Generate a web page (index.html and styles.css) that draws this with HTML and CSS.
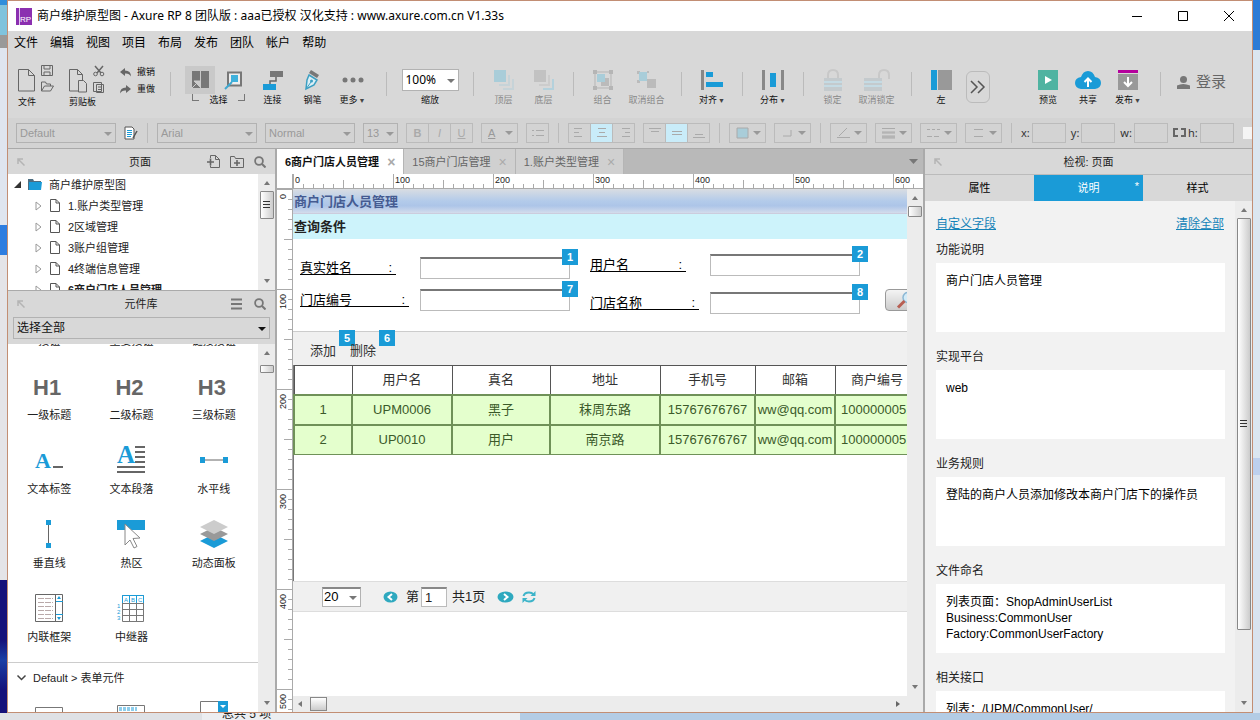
FILE: index.html
```html
<!DOCTYPE html>
<html lang="zh-CN">
<head>
<meta charset="utf-8">
<title>商户维护原型图 - Axure RP 8</title>
<link rel="stylesheet" href="styles.css">
</head>
<body>
<svg class="defs" aria-hidden="true">
  <symbol id="page" viewBox="0 0 10 13"><path d="M.5.5h5.500l3.500 3.500v8.500h-9zM6 .5V4h3.500" fill="#fff" stroke="#555"/></symbol>
  <symbol id="twig" viewBox="0 0 7 10"><path d="M1 1l5 4-5 4z" fill="none" stroke="#999"/></symbol>
  <symbol id="up" viewBox="0 0 6 4"><path d="M0 4l3-4 3 4z" fill="#777"/></symbol>
  <symbol id="down" viewBox="0 0 6 4"><path d="M0 0l3 4 3-4z" fill="#777"/></symbol>
  <symbol id="pin" viewBox="0 0 8 8"><path d="M7.500 7.500L1.500 1.500M1 6V1h5" fill="none" stroke="#b4b4b4" stroke-width="1.500"/></symbol>
  <symbol id="find" viewBox="0 0 12 12"><circle cx="5" cy="5" r="3.900" fill="none" stroke="#777" stroke-width="1.800"/><path d="M8 8l3.500 3.500" stroke="#777" stroke-width="2"/></symbol>
</svg>
<div class="desktop">
  <div class="edge-left"></div>
  <main class="window">
    <header class="titlebar">
      <svg class="logo" width="16" height="17" viewBox="0 0 16 17"><path fill="#8b2fb0" d="M0 0h16v17H0z"/><path stroke="#e3c6ee" d="M3.500 0v17"/><text x="4" y="14" font-size="8" fill="#fff" font-family="Liberation Sans">RP</text></svg>
      <h1>商户维护原型图 - Axure RP 8 团队版 : aaa已授权 汉化支持 : www.axure.com.cn V1.33s</h1>
      <button class="winbtn" aria-label="最小化"><svg width="11" height="11"><path d="M0 5.500h10" stroke="#000"/></svg></button>
      <button class="winbtn" aria-label="最大化"><svg width="11" height="11"><path d="M.5.5h9v9h-9z" fill="none" stroke="#000"/></svg></button>
      <button class="winbtn" aria-label="关闭"><svg width="11" height="11"><path d="M0 0l10 10M10 0L0 10" stroke="#000"/></svg></button>
    </header>
    <nav class="menu"><button>文件</button><button>编辑</button><button>视图</button><button>项目</button><button>布局</button><button>发布</button><button>团队</button><button>帐户</button><button>帮助</button></nav>

    <div class="toolbar">
      <div class="group file">
        <div class="cluster"><div class="icons">
          <svg width="37" height="28" fill="none" stroke="#666"><path d="M.5 3.500h10l6 6v15.500h-16zM10.500 3.500v6h6M23.500-.500h11v10h-11zM26 0v3h6V0M26 9V6h6v3M23.500 25v-9h4l1 2h4v2M23.500 25l3-5h9l-3 5z"/></svg></div><span>文件</span></div>
        <div class="cluster"><div class="icons">
          <svg width="37" height="28" fill="none" stroke="#666"><path d="M9 25H.5V3.500h8l5 5V14M8.500 3.500v5h5M9.500 14.500h5l3 3V26h-8zM24.500 16.500h8v9h-8zM27.500 18.500h7v8h-7zM29 21h4M29 23.500h4"/><path d="M26 0l6 7M34 0l-6 7" stroke-width="1.500"/><circle cx="26.500" cy="8" r="1.800"/><circle cx="33" cy="8" r="1.800"/></svg></div><span>剪贴板</span></div>
        <div class="history">
          <button><svg width="12" height="9"><path d="M0 4l5-4v2.500q6 0 6 6Q9 5 5 5.500V8z" fill="#666"/></svg>撤销</button>
          <button><svg width="12" height="9"><path d="M11 4L6 0v2.500q-6 0-6 6Q2 5 6 5.500V8z" fill="#666"/></svg>重做</button>
        </div>
      </div>
      <i class="sep"></i>
      <div class="group pick">
        <div class="select-tool">
          <div class="icons"><button class="on" aria-label="相交选中"><svg width="18" height="20"><path d="M1 1h8v17H1zM10 1h8v17h-8z" fill="#777"/><path d="M0 19l6-6M3 11h6v6z" stroke="#ccc" fill="#ccc"/></svg></button>
          <button aria-label="包含选中"><svg width="18" height="20"><path d="M3 2.500h13v13H3z" fill="#eee" stroke="#777" stroke-width="2"/><path d="M6 5h7v7H6z" fill="#3fb1dc"/><path d="M0 19l7-7" stroke="#3fa8d0" stroke-width="2"/></svg></button></div>
          <span class="bracket"><i></i>选择<i></i></span>
        </div>
        <button class="tool"><svg width="20" height="20"><path d="M7 1h13v6H7z" fill="#777"/><path d="M13 7v4H7v4" fill="none" stroke="#666" stroke-width="1.500"/><path d="M0 14h13v6H0z" fill="#1a9bd7"/></svg>连接</button>
        <button class="tool"><svg width="16" height="20"><path d="M6 0l8 5-2 3-8-5z" fill="#777"/><path d="M4 5l8 5-3 5-8 4 1-9z" fill="#dceff6" stroke="#3c9fc2" stroke-width="1.500"/><path d="M1 19l5-7" stroke="#3c9fc2"/><circle cx="6.500" cy="11" r="1.500" fill="#3c9fc2"/></svg>钢笔</button>
        <button class="tool"><svg width="22" height="6"><circle cx="3" cy="3" r="2.500" fill="#777"/><circle cx="11" cy="3" r="2.500" fill="#777"/><circle cx="19" cy="3" r="2.500" fill="#777"/></svg><span>更多<b>▼</b></span></button>
      </div>
      <i class="sep"></i>
      <div class="group zoom"><label class="tool"><span class="combo white"><select><option>100%</option></select></span>缩放</label></div>
      <i class="sep"></i>
      <div class="group order">
        <button class="tool off"><svg width="20" height="20"><path d="M0 0h12v12H0z" fill="#a9cdd9"/><path d="M14 5h2v11H5v-2h9zM18 9h2v11H9v-2h9z" fill="#c6d3d8"/></svg>顶层</button>
        <button class="tool off"><svg width="20" height="20"><path d="M0 0h12v12H0z" fill="#c2c2c2"/><path d="M14 5h2v11H5v-2h9z" fill="#ccc"/><path d="M18 9h2v11H9v-2h9z" fill="#b4d1dc"/></svg>底层</button>
      </div>
      <i class="sep"></i>
      <div class="group pair">
        <button class="tool off"><svg width="20" height="20"><path d="M2 2h16v16H2z" fill="none" stroke="#b5b5b5"/><path d="M0 0h4v4H0zM16 0h4v4h-4zM0 16h4v4H0zM16 16h4v4h-4z" fill="#b5b5b5"/><path d="M8 8h8v8H8z" fill="#bbb"/><path d="M4 4h8v8H4z" fill="#a9cdd9"/></svg>组合</button>
        <button class="tool off"><svg width="20" height="20"><path d="M0 1h3v3H0zM10 1h2v2h-2zM0 10h3v3H0z" fill="#bbb"/><path d="M2 2h8v9H2z" fill="#a9cdd9"/><path d="M10 9h9v9h-9z" fill="#bbb"/></svg>取消组合</button>
      </div>
      <i class="sep"></i>
      <div class="group align"><button class="tool"><svg width="22" height="20"><path d="M0 0h3v20H0z" fill="#888"/><path d="M5 2h7v5H5zM5 12h17v5H5z" fill="#1a9bd7"/></svg><span>对齐<b>▼</b></span></button></div>
      <i class="sep"></i>
      <div class="group align"><button class="tool"><svg width="22" height="20"><path d="M0 0h3v20H0zM19 0h3v20h-3z" fill="#888"/><path d="M8 3h6v14H8z" fill="#1a9bd7"/></svg><span>分布<b>▼</b></span></button></div>
      <i class="sep"></i>
      <div class="group pair">
        <button class="tool off"><svg width="18" height="22"><path d="M4 9V6q0-5 5-5t5 5v3" fill="none" stroke="#c8c8c8" stroke-width="2"/><path d="M0 9h18v13H0z" fill="#c4cacd"/><path d="M0 13h18M0 17h18" stroke="#c5dbe4" stroke-width="2"/></svg>锁定</button>
        <button class="tool off"><svg width="26" height="22"><path d="M15 9V6q0-5 5-5t5 5v4" fill="none" stroke="#c8c8c8" stroke-width="2"/><path d="M0 9h18v13H0z" fill="#c4cacd"/><path d="M0 13h18M0 17h18" stroke="#c5dbe4" stroke-width="2"/></svg>取消锁定</button>
      </div>
      <i class="sep"></i>
      <div class="group dock"><button class="tool"><svg width="21" height="20"><path d="M0 0h6v20H0z" fill="#1a9bd7"/><path d="M7 0h14v20H7z" fill="#999"/></svg>左</button></div>
      <button class="overflow" aria-label="更多工具"><svg width="16" height="14"><path d="M1 1l6 6-6 6M8 1l6 6-6 6" fill="none" stroke="#555" stroke-width="1.500"/></svg></button>
      <div class="group share">
        <button class="tool"><svg width="20" height="20"><path d="M0 0h20v20H0z" fill="#4fb3a1"/><path d="M7 6l7 4-7 4z" fill="#fff"/></svg>预览</button>
        <button class="tool"><svg width="26" height="20"><path d="M6 19q-6-1-6-6t6-6q2-6 7-6t7 6q6 1 6 6t-6 6z" fill="#1a9bd7"/><path d="M13 17V9M9.500 12l3.500-3.500 3.500 3.500" fill="none" stroke="#fff" stroke-width="2"/></svg>共享</button>
        <button class="tool"><svg width="20" height="20"><path d="M0 0h20v3H0z" fill="#b5009c"/><path d="M0 4h20v16H0z" fill="#999"/><path d="M10 7v9M6 12l4 4 4-4" fill="none" stroke="#fff" stroke-width="2"/></svg><span>发布<b>▼</b></span></button>
      </div>
      <i class="sep"></i>
      <button class="login"><svg width="13" height="13"><circle cx="6.500" cy="3.500" r="3.500" fill="#777"/><path d="M0 13V9.500q6-3 13 0V13z" fill="#777"/></svg>登录</button>
    </div>

    <div class="format">
      <span class="combo w100"><select disabled aria-label="样式"><option>Default</option></select></span>
      <button class="plain" aria-label="管理样式"><svg width="14" height="14"><path d="M1 1h7l2 2v10H1z" fill="#fff" stroke="#555"/><path d="M3 4.500h5M3 6.500h5M3 8.500h5M3 10.500h4" stroke="#1a9bd7"/><path d="M13 5l-4 7" stroke="#555" stroke-width="1.500"/></svg></button>
      <i class="bar"></i>
      <span class="combo w100"><select disabled aria-label="字体"><option>Arial</option></select></span>
      <span class="combo w90"><select disabled aria-label="字重"><option>Normal</option></select></span>
      <span class="combo w35"><select disabled aria-label="字号"><option>13</option></select></span>
      <span class="seg"><button><b>B</b></button><button><i>I</i></button><button><u>U</u></button></span>
      <button class="drop"><u>A</u></button>
      <span class="seg"><button aria-label="项目符号"><svg width="12" height="10"><path d="M0 2.500h2M4 2.500h8M0 7.500h2M4 7.500h8"/></svg></button></span>
      <i class="bar"></i>
      <span class="seg"><button aria-label="左对齐"><svg width="12" height="10"><path d="M0 .5h8M0 4.500h5M0 8.500h8"/></svg></button><button class="on" aria-label="居中"><svg width="12" height="10"><path d="M2 .5h8M3 4.500h6M1 8.500h10"/></svg></button><button aria-label="右对齐"><svg width="12" height="10"><path d="M4 .5h8M7 4.500h5M4 8.500h8"/></svg></button></span>
      <span class="seg"><button aria-label="顶端"><svg width="12" height="10"><path d="M0 .5h12M2 3.500h8"/></svg></button><button class="on" aria-label="中部"><svg width="12" height="10"><path d="M1 3.500h10M1 6.500h10"/></svg></button><button aria-label="底部"><svg width="12" height="10"><path d="M2 6.500h8M0 9.500h12"/></svg></button></span>
      <i class="bar"></i>
      <button class="drop" aria-label="填充"><svg width="13" height="12"><path d="M1 1h11v10H1z" fill="#a9cdd9"/></svg></button>
      <button class="drop" aria-label="阴影"><svg width="13" height="10"><path d="M2 8h8V2"/></svg></button>
      <i class="bar"></i>
      <button class="drop" aria-label="线色"><svg width="13" height="12"><path d="M2 9l8-8M0 10.500h13"/></svg></button>
      <button class="drop" aria-label="线宽"><svg width="13" height="12"><path d="M0 1.500h13M0 5h13M0 6h13M0 9h13M0 10h13M0 11h13"/></svg></button>
      <button class="drop" aria-label="线型"><svg width="13" height="10"><path d="M0 1.500h3M5 1.500h3M10 1.500h3M0 8.500h5M7 8.500h5"/></svg></button>
      <button class="drop" aria-label="箭头"><svg width="13" height="10"><path d="M2 1.500h9M2 8.500h9"/></svg></button>
      <i class="bar"></i>
      <label>x:<input></label><label>y:<input></label><label>w:<input></label>
      <label><svg width="13" height="10"><path class="link" d="M5 1H1v7h4M8 1h4v7H8"/></svg>h:<input></label>
      <input type="checkbox" class="hide" aria-label="隐藏">
    </div>

    <div class="work">
      <aside class="left">
        <div class="panel-head"><svg width="8" height="8"><use href="#pin"/></svg><h2>页面</h2>
          <button aria-label="添加页面"><svg width="13" height="13" fill="none" stroke="#666"><path d="M3.500 3V.5h5l4 4v8h-9v-2M8.500.5v4h4"/><path d="M0 7h7M3.500 3.500v7" stroke-width="1.600"/></svg></button>
          <button aria-label="添加文件夹"><svg width="14" height="12" fill="none" stroke="#666"><path d="M.5 11.500V.5h4l1 2h8v9z"/><path d="M4 7h6M7 4v6" stroke-width="1.600"/></svg></button>
          <button aria-label="搜索页面"><svg width="12" height="12"><use href="#find"/></svg></button></div>
        <div class="scroller tree-pane">
          <ul class="tree">
            <li class="root"><svg width="7" height="7"><path d="M7 0v7H0z" fill="#333"/></svg><svg width="14" height="11"><path d="M0 0h5l1 2h7v9H0z" fill="#4d6d80"/><path d="M1 3h13l-1 8H1z" fill="#1a9bd7"/></svg>商户维护原型图</li>
            <li><svg width="7" height="10"><use href="#twig"/></svg><svg width="10" height="13"><use href="#page"/></svg>1.账户类型管理</li>
            <li><svg width="7" height="10"><use href="#twig"/></svg><svg width="10" height="13"><use href="#page"/></svg>2区域管理</li>
            <li><svg width="7" height="10"><use href="#twig"/></svg><svg width="10" height="13"><use href="#page"/></svg>3账户组管理</li>
            <li><svg width="7" height="10"><use href="#twig"/></svg><svg width="10" height="13"><use href="#page"/></svg>4终端信息管理</li>
            <li class="current"><svg width="7" height="10"><use href="#twig"/></svg><svg width="10" height="13"><use href="#page"/></svg>6商户门店人员管理</li>
          </ul>
          <div class="vbar"><svg width="6" height="4"><use href="#up"/></svg><div class="thumb mid"><svg width="7" height="8"><path d="M0 .5h7M0 3.500h7M0 6.500h7" stroke="#333"/></svg></div><svg class="end" width="6" height="4"><use href="#down"/></svg></div>
        </div>
        <div class="panel-head second"><svg width="8" height="8"><use href="#pin"/></svg><h2>元件库</h2>
          <button aria-label="元件库菜单"><svg width="11" height="12"><path d="M0 1.500h11M0 6h11M0 10.500h11" stroke="#777" stroke-width="2"/></svg></button>
          <button aria-label="搜索元件"><svg width="12" height="12"><use href="#find"/></svg></button></div>
        <div class="library-pick"><span class="combo"><select aria-label="元件库"><option>选择全部</option></select></span></div>
        <div class="scroller lib-pane">
          <div class="lib">
            <div class="shapes scrolled">
              <figure><div></div><figcaption>按钮</figcaption></figure><figure><div></div><figcaption>主要按钮</figcaption></figure><figure><div></div><figcaption>链接按钮</figcaption></figure>
              <figure><div class="h">H1</div><figcaption>一级标题</figcaption></figure><figure><div class="h">H2</div><figcaption>二级标题</figcaption></figure><figure><div class="h">H3</div><figcaption>三级标题</figcaption></figure>
              <figure><div><svg width="28" height="18"><text x="0" y="17" font-size="22" font-weight="bold" fill="#1a9bd7" font-family="Liberation Serif">A</text><path d="M18 16h10" stroke="#666" stroke-width="2"/></svg></div><figcaption>文本标签</figcaption></figure>
              <figure><div><svg width="28" height="28"><text x="0" y="17" font-size="25" font-weight="bold" fill="#1a9bd7" font-family="Liberation Serif">A</text><path d="M18 1h10M18 6h10M18 11h10M18 16h10M0 21h28M0 26h28" stroke="#666" stroke-width="2"/></svg></div><figcaption>文本段落</figcaption></figure>
              <figure><div><svg width="28" height="6"><path d="M3 3h22" stroke="#666"/><path d="M0 0h5v6H0zM23 0h5v6h-5z" fill="#1a9bd7"/></svg></div><figcaption>水平线</figcaption></figure>
              <figure><div><svg width="6" height="28"><path d="M2.500 3v22" stroke="#666"/><path d="M0 0h5v5H0zM0 23h5v5H0z" fill="#1a9bd7"/></svg></div><figcaption>垂直线</figcaption></figure>
              <figure><div><svg width="28" height="30"><path d="M0 1h28v10H0z" fill="#1a9bd7"/><path d="M8 5v21l5-5 4 8 3-1.500-4-8 7-.5z" fill="#fff" stroke="#888"/></svg></div><figcaption>热区</figcaption></figure>
              <figure><div><svg width="28" height="28"><path d="M0 21l14-7 14 7-14 7z" fill="#1a9bd7"/><path d="M0 14l14-7 14 7-14 7z" fill="#999"/><path d="M0 7l14-7 14 7-14 7z" fill="#ccc"/></svg></div><figcaption>动态面板</figcaption></figure>
              <figure><div><svg width="28" height="28" fill="none"><path d="M.5.5h27v27H.5zM20.500 0v28" stroke="#666"/><path d="M3 4.500h15M3 8.500h15M3 12.500h15M3 16.500h15M3 20.500h15M3 24.500h15" stroke="#b9a9a9" stroke-dasharray="6 1"/><path d="M21 7.500h7M21 20.500h7" stroke="#1a9bd7"/><path d="M22 5l2-3 2 3zM22 23l2 3 2-3z" fill="#1a9bd7"/></svg></div><figcaption>内联框架</figcaption></figure>
              <figure><div><svg width="28" height="28" fill="none"><path d="M5.500 1.500h21v26h-21zM12.500 1v26M19.500 1v26M5 9.500h21M5 15.500h21M5 21.500h21" stroke="#777"/><path d="M5.500 9V1.500h21V9M12.500 1v8M19.500 1v8" stroke="#1a9bd7"/><g fill="#1a9bd7" font-size="6" font-family="Liberation Sans"><text x="7" y="8">A</text><text x="14" y="8">B</text><text x="21" y="8">C</text><text y="14">1</text><text y="20">2</text><text y="26">3</text></g></svg></div><figcaption>中继器</figcaption></figure>
            </div>
            <button class="section"><svg width="9" height="6"><path d="M.5.5l4 4 4-4" fill="none" stroke="#444" stroke-width="1.500"/></svg>Default &gt; 表单元件</button>
            <div class="shapes forms">
              <figure><svg width="28" height="20"><path d="M.5 6.500h27v12H.5z" fill="none" stroke="#777"/></svg></figure>
              <figure><svg width="28" height="20"><path d="M.5 4.500h27v14H.5z" fill="none" stroke="#777"/><path d="M2 7h18M2 9h18" stroke="#1a9bd7" stroke-dasharray="3 1"/></svg></figure>
              <figure><svg width="28" height="20"><path d="M.5.5h27v12H.5z" fill="none" stroke="#777"/><path d="M18 0h10v12H18z" fill="#1a9bd7"/><path d="M20 4l3 3 3-3z" fill="#fff"/></svg></figure>
            </div>
          </div>
          <div class="vbar"><svg width="6" height="4"><use href="#up"/></svg><div class="thumb low"></div><svg class="end" width="6" height="4"><use href="#down"/></svg></div>
        </div>
      </aside>

      <section class="center">
        <div class="tabs"><button class="on">6商户门店人员管理<span>×</span></button><button>15商户门店管理<span>×</span></button><button>1.账户类型管理<span>×</span></button><svg width="9" height="5"><path d="M0 0h9L4.500 5z" fill="#777"/></svg></div>
        <div class="stage">
          <div class="corner"></div>
          <div class="hruler"><span>0</span><span>100</span><span>200</span><span>300</span><span>400</span><span>500</span><span>600</span></div>
          <div class="vruler"><span>0</span><span>100</span><span>200</span><span>300</span><span>400</span><span>500</span></div>
          <div class="canvas">
            <div class="proto">
              <h3 class="page-title">商户门店人员管理</h3>
              <h3 class="query-title">查询条件</h3>
              <div class="query">
                <div class="fields first">
                  <label><span class="name short"><span>真实姓名</span><span>:</span></span><span class="box"><input><em>1</em></span></label>
                  <label><span class="name"><span>门店编号</span><span>:</span></span><span class="box"><input><em>7</em></span></label>
                </div>
                <div class="fields">
                  <label><span class="name short"><span>用户名</span><span>:</span></span><span class="box"><input><em>2</em></span></label>
                  <label><span class="name"><span>门店名称</span><span>:</span></span><span class="box"><input><em>8</em></span></label>
                </div>
                <button class="search" aria-label="查询"><svg width="18" height="18"><circle cx="11" cy="6.500" r="5" fill="#d3ebf7" stroke="#8bb7d4" stroke-width="1.500"/><path d="M7.500 10L1 16.500" stroke="#b85f53" stroke-width="3"/></svg></button>
              </div>
              <div class="actions"><button>添加<em>5</em></button><button>删除<em>6</em></button></div>
              <div class="grid-area">
                <table>
                  <colgroup><col class="c58"><col class="c100"><col class="c98"><col class="c110"><col class="c95"><col class="c80"><col class="c84"></colgroup>
                  <thead><tr><th></th><th>用户名</th><th>真名</th><th>地址</th><th>手机号</th><th>邮箱</th><th>商户编号</th></tr></thead>
                  <tbody><tr><td>1</td><td>UPM0006</td><td>黑子</td><td>秣周东路</td><td>15767676767</td><td>ww@qq.com</td><td>1000000051</td></tr>
                  <tr><td>2</td><td>UP0010</td><td>用户</td><td>南京路</td><td>15767676767</td><td>ww@qq.com</td><td>1000000051</td></tr></tbody>
                </table>
              </div>
              <div class="pager">
                <span class="combo white"><select aria-label="每页条数"><option>20</option></select></span>
                <button aria-label="上一页"><svg width="15" height="12"><ellipse cx="7.500" cy="6" rx="7" ry="5.500" fill="#2fa9bf"/><path d="M9 3L5.500 6 9 9" fill="none" stroke="#fff" stroke-width="2"/></svg></button>
                <label>第<input value="1"></label><span class="total">共1页</span>
                <button aria-label="下一页"><svg width="17" height="12"><ellipse cx="8.500" cy="6" rx="8" ry="5.500" fill="#2fa9bf"/><path d="M7 3l3.500 3L7 9" fill="none" stroke="#fff" stroke-width="2"/></svg></button>
                <button aria-label="刷新"><svg width="14" height="12"><path d="M1.500 5q1-3.500 5.500-3.500 3 0 4.500 2M12.500 7q-1 3.500-5.500 3.500-3 0-4.500-2" fill="none" stroke="#3db4c9" stroke-width="2"/><path d="M13.500 0v5H8.500zM.5 12V7h5z" fill="#3db4c9"/></svg></button>
              </div>
            </div>
          </div>
          <div class="vbar"><svg width="6" height="4"><use href="#up"/></svg><div class="thumb tall"></div><svg class="end" width="6" height="4"><use href="#down"/></svg></div>
          <div class="hbar"><svg width="4" height="6"><path d="M4 0v6L0 3z" fill="#777"/></svg><div class="hthumb"></div><svg class="far" width="4" height="6"><path d="M0 0v6l4-3z" fill="#666"/></svg></div>
        </div>
      </section>

      <aside class="right">
        <div class="panel-head"><svg width="8" height="8"><use href="#pin"/></svg><h2>检视: 页面</h2></div>
        <div class="inspect-tabs"><button>属性</button><button class="on">说明<sup>*</sup></button><button>样式</button></div>
        <div class="scroller notes-pane">
          <div class="notes">
            <div class="links"><a href="#fields">自定义字段</a><a href="#clear">清除全部</a></div>
            <label>功能说明<textarea>商户门店人员管理</textarea></label>
            <label>实现平台<textarea>web</textarea></label>
            <label>业务规则<textarea>登陆的商户人员添加修改本商户门店下的操作员</textarea></label>
            <label>文件命名<textarea>列表页面：ShopAdminUserList
Business:CommonUser
Factory:CommonUserFactory</textarea></label>
            <label>相关接口<textarea>列表：/UPM/CommonUser/</textarea></label>
          </div>
          <div class="vbar"><svg width="6" height="4"><use href="#up"/></svg><div class="thumb long"><svg width="7" height="8"><path d="M0 .5h7M0 3.500h7M0 6.500h7" stroke="#333"/></svg></div><svg class="end" width="6" height="4"><use href="#down"/></svg></div>
        </div>
      </aside>
    </div>
  </main>
  <div class="edge-right"></div>
  <div class="edge-bottom"><span>总共 5 项</span></div>
</div>
</body>
</html>
```
FILE: styles.css
```css
* { box-sizing: border-box; }
body { margin: 0; font: 11px/16px "Liberation Sans", "Noto Sans CJK SC", sans-serif; color: #222; }
button, input, select, textarea { font: inherit; color: inherit; margin: 0; padding: 0; border: 0; border-radius: 0; background: none; }
button, label { white-space: nowrap; }
h1, h2, h3, ul, figure { margin: 0; padding: 0; font-size: inherit; font-weight: normal; }
svg { display: block; flex: none; overflow: visible; }
.defs { position: absolute; width: 0; height: 0; }

/* desktop behind the window */
.desktop { display: grid; grid-template: minmax(0, 1fr) 7px / 7px minmax(0, 1fr) 7px; height: 100vh; overflow: hidden; background: #d6e1ec; }
.edge-left { background: linear-gradient(#2f8edb 0 5px, #7fc3dd 5px 35px, #999 35px 48px, #dfe5ef 48px 225px, #2d7de0 225px 255px, #e4e4e8 255px 580px, #15117a 580px 640px, #1a3fa5 660px, #15117a 690px); }
.edge-right { background: linear-gradient(#2c7bd6 0 50px, #dbe6f0 50px 458px, #bdd0ee 458px 475px, #d9e3ef 475px); }
.edge-bottom { grid-column: 1 / -1; background: linear-gradient(90deg, #dfe1e5 0 202px, #eceef1 202px 520px, #b3cce5 520px); overflow: hidden; }
.edge-bottom span { display: block; margin: -7px 0 0 222px; font-size: 12px; }

.window { display: flex; flex-direction: column; border: 1px solid #c28e74; background: #d8d8d8; min-height: 0; overflow: hidden; }
.titlebar { display: flex; align-items: center; height: 30px; flex: none; padding-left: 8px; background: #fff; }
.titlebar h1 { flex: 1; margin-left: 5px; font: 12px/16px "Noto Sans", "Noto Sans CJK SC", sans-serif; color: #000; }
.winbtn { display: flex; align-items: center; justify-content: center; width: 46px; height: 30px; }
.menu { display: flex; gap: 12px; height: 23px; flex: none; padding-left: 6px; font-size: 12px; color: #000; }

/* main toolbar */
.toolbar { display: flex; height: 64px; flex: none; padding: 12px 0 0 10px; font-size: 9px; line-height: 12px; color: #111; }
.sep { width: 1px; height: 24px; margin-top: 6px; background: #bbb; flex: none; }
.group { display: flex; justify-content: center; flex: none; }
.file { width: 152px; justify-content: flex-start; }
.cluster { width: 51px; }
.icons { display: flex; gap: 4px; height: 30px; }
.history { display: flex; flex-direction: column; gap: 5px; }
.history button { display: flex; align-items: center; gap: 5px; height: 12px; }
.pick { width: 215px; }
.zoom { width: 86px; }
.order { width: 99px; }
.pair { width: 107px; gap: 4px; padding-right: 6px; }
.align { width: 60px; }
.dock { width: 54px; padding-left: 4px; }
.tool { display: grid; grid-template-rows: 28px 12px; place-items: center; width: 40px; height: 40px; line-height: 12px; }
.tool b { font-size: 7px; margin-left: 1px; color: #444; }
.off { color: #888; }
.select-tool { width: 68px; }
.select-tool .icons { height: 28px; }
.select-tool button { display: grid; place-items: center; width: 30px; height: 28px; }
.select-tool .on { background: #c9c9c9; }
.bracket { display: flex; justify-content: center; gap: 10px; }
.bracket i { width: 7px; height: 7px; border: solid #777; border-width: 0 0 1px 1px; }
.bracket i:last-child { border-width: 0 1px 1px 0; }
.overflow { display: grid; place-items: center; width: 24px; height: 32px; margin-top: 5px; border: 1px solid #bbb; border-radius: 6px; }
.share { margin-left: auto; padding-right: 12px; }
.login { display: flex; align-items: center; gap: 6px; width: 91px; height: 32px; padding-left: 16px; font-size: 15px; color: #666; }

/* combo boxes */
.combo { position: relative; display: flex; height: 20px; flex: none; border: 1px solid #b2b2b2; }
.combo select { appearance: none; width: 100%; padding-left: 3px; outline: 0; opacity: 1; }
.combo::after { content: ""; position: absolute; right: 3px; top: 50%; margin-top: -1px; border: 4px solid transparent; border-top-color: #777; border-bottom: 0; pointer-events: none; }
.white { background: #fff; color: #000; }
.zoom .tool { width: 58px; }
.zoom .combo { width: 57px; height: 22px; font: 12px/20px "Noto Sans", sans-serif; }

/* format bar */
.format { display: flex; align-items: center; gap: 8px; height: 31px; flex: none; padding-left: 8px; border-bottom: 1px solid #a9a9a9; background: #d3d3d3; color: #999; overflow: hidden; }
.format .combo::after, .drop::after { border-top-color: #999; }
.w100 { width: 100px; }
.w90 { width: 90px; }
.w35 { width: 35px; }
.bar { width: 1px; height: 20px; margin: 0 1px; background: #bbb; flex: none; }
.seg { display: flex; flex: none; border: 1px solid #bbb; }
.seg button { display: grid; place-items: center; width: 21px; height: 18px; color: #aaa; }
.seg button + button { width: 22px; border-left: 1px solid #bbb; }
.seg .on { background: #c9ecf9; }
.drop { display: flex; align-items: center; justify-content: space-between; width: 37px; height: 20px; flex: none; padding: 0 4px 0 6px; border: 1px solid #bbb; color: #999; }
.drop::after { content: ""; border: 4px solid transparent; border-top-color: #999; border-bottom: 0; }
.seg svg, .drop svg { fill: none; stroke: #aaa; }
.format label { display: flex; align-items: center; gap: 2px; flex: none; margin-right: -3px; font: 11px/16px "Noto Sans", sans-serif; color: #333; }
.format label input { width: 34px; height: 20px; border: 1px solid #bbb; }
.link { fill: none; stroke: #666; stroke-width: 2; }
.hide { appearance: none; width: 12px; height: 12px; flex: none; margin-left: 4px; background: #f4f4f4; }

/* panels */
.work { display: flex; flex: 1; min-height: 0; }
.left { display: flex; flex-direction: column; width: 269px; flex: none; border-right: 2px solid #aaa; }
.panel-head { display: flex; align-items: center; gap: 10px; height: 25px; flex: none; padding: 0 9px; }
.panel-head h2 { flex: 1; text-align: center; }
.left .panel-head h2 { padding-left: 48px; }
.left .second h2 { padding-left: 26px; }
.right .panel-head h2 { padding-right: 18px; }
.second { height: 27px; border-top: 1px solid #aaa; gap: 12px; }
.scroller { display: flex; min-height: 0; overflow: hidden; }
.tree-pane { height: 116px; flex: none; background: #fff; }
.tree { flex: 1; list-style: none; }
.tree li { display: flex; align-items: center; gap: 8px; height: 21px; padding-left: 27px; white-space: nowrap; }
.tree .root { padding-left: 6px; gap: 7px; }
.tree .current { font-weight: bold; }
.vbar { display: flex; flex-direction: column; align-items: center; gap: 6px; width: 17px; flex: none; padding: 7px 0; background: #ececec; }
.thumb { display: grid; place-items: center; width: 14px; height: 8px; flex: none; border: 1px solid #888; border-radius: 1px; background: linear-gradient(90deg, #fff, #ccc); }
.tall { height: 11px; }
.mid { height: 28px; }
.low { margin-top: 4px; }
.end { margin-top: auto; }
.library-pick { padding: 0 5px 5px; flex: none; }
.library-pick .combo { height: 22px; font-size: 12px; color: #111; }
.library-pick .combo::after { border-top-color: #111; }
.lib-pane { flex: 1; background: #fff; }
.lib { flex: 1; }
.shapes { display: grid; grid-template-columns: repeat(3, 1fr); padding-right: 3px; }
.scrolled { margin-top: -69px; }
.shapes figure { height: 74px; padding-top: 14px; text-align: center; }
.shapes figure div { display: flex; align-items: center; justify-content: center; height: 44px; padding-top: 2px; }
.shapes figure .h { padding: 6px 4px 0 0; font-size: 22px; font-weight: bold; color: #666; }
.section { display: flex; align-items: center; gap: 7px; width: 100%; height: 31px; margin-top: 17px; padding-left: 9px; border-top: 1px solid #ccc; }
.forms figure { display: flex; justify-content: center; padding-top: 8px; }

/* design area */
.center { display: flex; flex-direction: column; flex: 1; min-width: 0; }
.tabs { display: flex; align-items: center; height: 25px; flex: none; padding-right: 5px; background: #b9b9b9; }
.tabs button { display: flex; align-items: center; height: 25px; padding: 0 8px; gap: 8px; background: #d0d0d0; color: #666; border-right: 1px solid #b5b5b5; }
.tabs .on { background: #fff; color: #111; font-weight: bold; }
.tabs span { font-size: 14px; color: #aaa; }
.tabs > svg { margin-left: auto; }
.stage { display: grid; grid-template: 15px minmax(0, 1fr) 16px / 16px minmax(0, 1fr) 16px; flex: 1; min-height: 0; background: #fff; }
.corner { border: solid #aaa; border-width: 0 1px 1px 0; }
.hruler { display: flex; grid-column: 2 / 4; overflow: hidden; border-bottom: 1px solid #aaa; font-size: 9px; line-height: 12px;
  background: repeating-linear-gradient(90deg, #aaa 0 1px, transparent 1px 100px) 0 0 / 100% 100%,
    repeating-linear-gradient(90deg, #aaa 0 1px, transparent 1px 50px) 0 100% / 100% 8px no-repeat,
    repeating-linear-gradient(90deg, #aaa 0 1px, transparent 1px 10px) 0 100% / 100% 4px no-repeat; }
.hruler span { width: 100px; flex: none; padding-left: 2px; }
.vruler { grid-row: 2 / 4; overflow: hidden; border-right: 1px solid #aaa; font-size: 9px; line-height: 12px;
  background: repeating-linear-gradient(#aaa 0 1px, transparent 1px 100px) 0 0 / 100% 100%,
    repeating-linear-gradient(#aaa 0 1px, transparent 1px 50px) 100% 0 / 8px 100% no-repeat,
    repeating-linear-gradient(#aaa 0 1px, transparent 1px 10px) 100% 0 / 4px 100% no-repeat; }
.vruler span { display: block; width: 12px; height: 100px; padding-bottom: 5px; writing-mode: vertical-rl; transform: rotate(180deg); text-align: right; }
.canvas { overflow: hidden; min-width: 0; }
.stage .vbar { width: 16px; }
.hbar { display: flex; align-items: center; gap: 8px; grid-column: 2 / 4; padding: 0 23px 0 5px; background: #ececec; }
.hthumb { width: 17px; height: 14px; border: 1px solid #888; background: linear-gradient(#fff, #ccc); }
.far { margin-left: auto; }

/* prototype on the canvas */
.proto { min-width: 620px; font-size: 13px; }
.page-title { height: 25px; padding-left: 1px; border-bottom: 1px solid #ccd; background: linear-gradient(#d9dde2, #b3cbea 50%, #adc5e8 70%, #d3dcec); font-weight: bold; line-height: 26px; color: #455b91; }
.query-title { height: 25px; padding-left: 1px; background: #cdf3fb; font-weight: bold; line-height: 26px; }
.query { display: flex; height: 92px; padding: 15px 0 0 7px; }
.fields { display: flex; flex-direction: column; gap: 16px; width: 290px; flex: none; }
.first { gap: 10px; padding-top: 3px; }
.fields label { display: flex; height: 22px; color: #000; }
.name { display: flex; justify-content: space-between; width: 109px; height: 18px; margin-right: 11px; padding-right: 4px; border-bottom: 1px solid #000; line-height: 22px; }
.short { width: 96px; margin-right: 24px; }
.box { position: relative; }
.box input { width: 150px; height: 22px; border: 1px solid #bbb; border-top: 2px solid #777; background: #fff; }
em { position: absolute; width: 16px; height: 16px; background: #1a9bd7; color: #fff; font: bold 11px/16px "Liberation Sans", sans-serif; text-align: center; }
.box em { right: -8px; top: -8px; }
.search { width: 45px; height: 22px; margin: 35px 0 0 5px; padding-left: 11px; border: 1px solid #999; border-radius: 4px; background: linear-gradient(#f4f4f4, #ccc); }
.actions { display: flex; gap: 14px; height: 34px; padding: 6px 0 0 17px; border-top: 1px solid #ccc; background: #f0f0f0; color: #333; }
.actions button { position: relative; height: 26px; line-height: 26px; }
.actions em { right: -19px; top: -8px; }
.grid-area { height: 216px; border-left: 1px solid #777; }
table { width: 625px; margin-left: -1px; table-layout: fixed; border-collapse: collapse; color: #333; }
th, td { height: 30px; padding: 0; font-weight: normal; text-align: center; white-space: nowrap; overflow: hidden; }
th { height: 29px; border: 1px solid #555; }
td { border: 2px solid #6f9158; border-width: 2px 1px 1px 2px; background: #e4ffcd; color: #3b5a2a; }
.c58 { width: 58px; }
.c100 { width: 100px; }
.c98 { width: 98px; }
.c110 { width: 110px; }
.c95 { width: 95px; }
.c80 { width: 80px; }
.c84 { width: 84px; }
.pager { display: flex; align-items: center; height: 31px; padding-left: 29px; gap: 8px; border: solid #ddd; border-width: 1px 0; background: #f0f0f0; }
.pager .combo { width: 39px; margin-right: 14px; padding-right: 14px; border-top: 2px solid #888; }
.pager .combo select { padding-left: 1px; }
.pager label { display: flex; align-items: center; }
.pager input { width: 26px; height: 20px; margin: 0 -3px 0 2px; padding-left: 3px; border: 1px solid #bbb; border-top: 2px solid #888; background: #fff; }
.total { width: 37px; }

/* inspector */
.right { display: flex; flex-direction: column; width: 329px; flex: none; border-left: 2px solid #aaa; }
.inspect-tabs { display: grid; grid-template-columns: 1fr 1fr 1fr; height: 27px; flex: none; border-top: 1px solid #bbb; color: #000; }
.inspect-tabs button { position: relative; }
.inspect-tabs .on { background: #1a9bd7; color: #fff; }
.inspect-tabs sup { position: absolute; right: 4px; top: 5px; font-size: 11px; line-height: 12px; }
.notes-pane { flex: 1; background: #f2f2f2; font-size: 12px; }
.notes { flex: 1; padding: 10px 10px 0 11px; }
.notes .links { display: flex; justify-content: space-between; line-height: 26px; padding-right: 1px; }
.notes a { color: #1583b8; }
.notes label { display: block; margin-bottom: 12px; line-height: 26px; }
.notes textarea { display: block; width: 100%; height: 69px; padding: 10px 10px 9px; resize: none; overflow: hidden; background: #fff; line-height: 16px; color: #000; }
.long { height: 412px; }
```
